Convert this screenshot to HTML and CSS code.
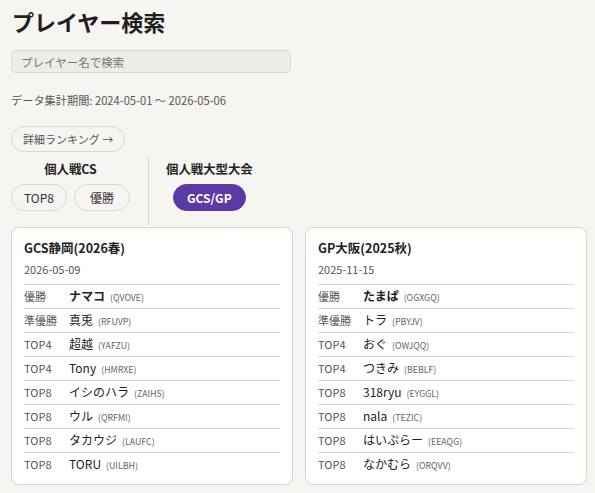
FILE: index.html
```html
<!DOCTYPE html>
<html lang="ja">
<head>
<meta charset="utf-8">
<title>プレイヤー検索</title>
<link rel="stylesheet" href="styles.css">
</head>
<body>
<main class="page">
  <h1 class="title">プレイヤー検索</h1>
  <input class="search" type="text" placeholder="プレイヤー名で検索">
  <p class="period">データ集計期間: 2024-05-01 〜 2026-05-06</p>
  <button class="pill">詳細ランキング →</button>

  <div class="filters">
    <div class="group group-cs">
      <h2 class="group-title">個人戦CS</h2>
      <div class="group-buttons">
        <button class="pill pill-lg">TOP8</button>
        <button class="pill pill-lg">優勝</button>
      </div>
    </div>
    <div class="divider"></div>
    <div class="group">
      <h2 class="group-title">個人戦大型大会</h2>
      <div class="group-buttons">
        <button class="pill pill-lg pill-active">GCS/GP</button>
      </div>
    </div>
  </div>

  <div class="cards">
    <section class="card">
      <h3 class="card-title">GCS静岡(2026春)</h3>
      <div class="card-date">2026-05-09</div>
      <ul class="results">
        <li class="row"><span class="rank">優勝</span><span class="name strong">ナマコ</span><span class="code">(QVOVE)</span></li>
        <li class="row"><span class="rank">準優勝</span><span class="name">真兎</span><span class="code">(RFUVP)</span></li>
        <li class="row"><span class="rank">TOP4</span><span class="name">超越</span><span class="code">(YAFZU)</span></li>
        <li class="row"><span class="rank">TOP4</span><span class="name">Tony</span><span class="code">(HMRXE)</span></li>
        <li class="row"><span class="rank">TOP8</span><span class="name">イシのハラ</span><span class="code">(ZAIHS)</span></li>
        <li class="row"><span class="rank">TOP8</span><span class="name">ウル</span><span class="code">(QRFMI)</span></li>
        <li class="row"><span class="rank">TOP8</span><span class="name">タカウジ</span><span class="code">(LAUFC)</span></li>
        <li class="row"><span class="rank">TOP8</span><span class="name">TORU</span><span class="code">(UILBH)</span></li>
      </ul>
    </section>
    <section class="card">
      <h3 class="card-title">GP大阪(2025秋)</h3>
      <div class="card-date">2025-11-15</div>
      <ul class="results">
        <li class="row"><span class="rank">優勝</span><span class="name strong">たまぱ</span><span class="code">(OGXGQ)</span></li>
        <li class="row"><span class="rank">準優勝</span><span class="name">トラ</span><span class="code">(PBYJV)</span></li>
        <li class="row"><span class="rank">TOP4</span><span class="name">おぐ</span><span class="code">(OWJQQ)</span></li>
        <li class="row"><span class="rank">TOP4</span><span class="name">つきみ</span><span class="code">(BEBLF)</span></li>
        <li class="row"><span class="rank">TOP8</span><span class="name">318ryu</span><span class="code">(EYGGL)</span></li>
        <li class="row"><span class="rank">TOP8</span><span class="name">nala</span><span class="code">(TEZIC)</span></li>
        <li class="row"><span class="rank">TOP8</span><span class="name">はいぷらー</span><span class="code">(EEAQG)</span></li>
        <li class="row"><span class="rank">TOP8</span><span class="name">なかむら</span><span class="code">(ORQVV)</span></li>
      </ul>
    </section>
  </div>
</main>
</body>
</html>
```

FILE: styles.css
```css
* {
  box-sizing: border-box;
}

html, body {
  margin: 0;
  background: #f6f5f1;
}

body {
  font-family: "Noto Sans CJK JP", "Noto Sans", sans-serif;
  color: #222;
}

.page {
  padding: 4px 8px 8px 11px;
  display: flex;
  flex-direction: column;
  align-items: flex-start;
}

.title {
  margin: 0 0 0 1px;
  font-size: 22px;
  font-weight: 700;
  line-height: 34px;
  color: #1f1f1f;
}

.search {
  margin-top: 12px;
  width: 280px;
  height: 23px;
  padding: 0 9px;
  border: 1px solid #dad7d1;
  border-radius: 5px;
  background: #eeece7;
  font: inherit;
  font-size: 11.5px;
  color: #333;
  outline: none;
}

.search::placeholder {
  color: #777;
}

.period {
  margin: 18px 0 0;
  font-size: 11.2px;
  line-height: 18px;
  color: #555;
}

.pill {
  font: inherit;
  font-size: 11px;
  color: #555;
  background: #f6f5f1;
  border: 1px solid #d9d6d0;
  border-radius: 13px;
  height: 26px;
  padding: 0 11px;
  cursor: pointer;
}

.period + .pill {
  margin-top: 17px;
}

.pill-lg {
  min-width: 56px;
  height: 27px;
  border-radius: 14px;
  padding: 0 12px;
  font-size: 12px;
  color: #333;
}

.pill-active {
  background: #5b3aa6;
  border-color: #5b3aa6;
  color: #fff;
  font-weight: 700;
  padding: 0 13px;
}

.filters {
  display: flex;
  align-items: stretch;
  margin-top: 5px;
}

.group {
  display: flex;
  flex-direction: column;
  align-items: center;
  padding-top: 2px;
}

.group-cs {
  width: 119px;
  align-items: flex-start;
}

.group-cs .group-title {
  align-self: center;
}

.group-title {
  margin: 0;
  font-size: 12.4px;
  font-weight: 700;
  line-height: 20px;
  color: #222;
}

.group-buttons {
  display: flex;
  gap: 7px;
  margin-top: 5px;
  margin-bottom: 14px;
}

.divider {
  width: 1px;
  background: #d6d3cd;
  margin: 0 17px 0 18px;
}

.cards {
  align-self: stretch;
  display: grid;
  grid-template-columns: 1fr 1fr;
  gap: 12px;
  margin-top: 2px;
}

.card {
  background: #fff;
  border: 1px solid #d9d6d0;
  border-radius: 8px;
  padding: 10px 12px 8px 12px;
}

.card-title {
  margin: 0;
  font-size: 12.5px;
  font-weight: 700;
  line-height: 20px;
  color: #222;
}

.card-date {
  font-size: 11px;
  line-height: 18px;
  color: #555;
  margin-top: 2px;
}

.results {
  list-style: none;
  margin: 6px 0 0;
  padding: 0;
}

.row {
  display: flex;
  align-items: baseline;
  height: 24px;
  line-height: 22px;
  border-top: 1px solid #d4d4d4;
}

.rank {
  width: 45px;
  flex: none;
  font-size: 11px;
  color: #555;
}

.name {
  font-size: 12px;
  color: #222;
}

.name.strong {
  font-weight: 700;
}

.code {
  margin-left: 5px;
  font-size: 8.8px;
  color: #666;
}
```
